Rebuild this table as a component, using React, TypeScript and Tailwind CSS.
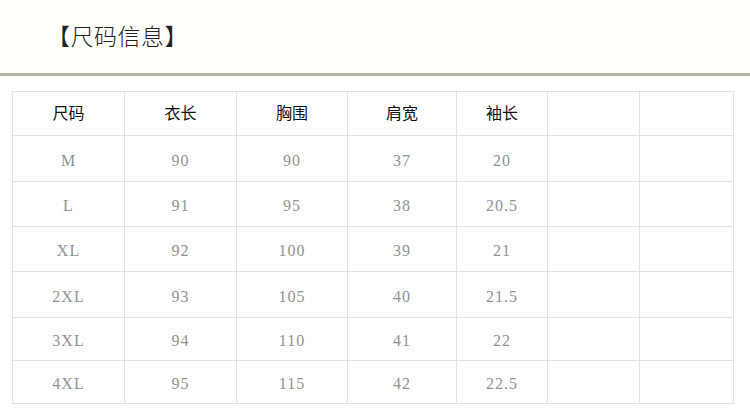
import React from 'react';

const headers = ['尺码', '衣长', '胸围', '肩宽', '袖长', '', ''];

const rows: { h: string; cells: string[] }[] = [
  { h: 'h-[46px]', cells: ['M', '90', '90', '37', '20', '', ''] },
  { h: 'h-[45px]', cells: ['L', '91', '95', '38', '20.5', '', ''] },
  { h: 'h-[45px]', cells: ['XL', '92', '100', '39', '21', '', ''] },
  { h: 'h-[46px]', cells: ['2XL', '93', '105', '40', '21.5', '', ''] },
  { h: 'h-[43px]', cells: ['3XL', '94', '110', '41', '22', '', ''] },
  { h: 'h-[43px]', cells: ['4XL', '95', '115', '42', '22.5', '', ''] },
];

const colWidths = ['w-[112px]', 'w-[112px]', 'w-[111px]', 'w-[109px]', 'w-[91px]', 'w-[92px]', 'w-[94px]'];

const App: React.FC = () => {
  return (
    <div className="w-[750px] h-[419px] bg-white overflow-hidden">
      {/* Title */}
      <div className="h-[73px] bg-[#fffffb] flex items-center pl-[47px] pb-[2px]">
        <h1
          className="text-[23px] text-[#222] tracking-[0.5px]"
          style={{ fontFamily: '"Noto Sans CJK SC", sans-serif', fontWeight: 300 }}
        >
          【尺码信息】
        </h1>
      </div>
      <div className="h-[3px] bg-[#b6b6a3]" />

      {/* Size table */}
      <div className="pt-[15px] pl-[12px]">
        <table className="border-collapse table-fixed w-[722px]">
          <colgroup>
            {colWidths.map((w, i) => (
              <col key={i} className={w} />
            ))}
          </colgroup>
          <thead>
            <tr className="h-[44px]">
              {headers.map((t, i) => (
                <th
                  key={i}
                  className="border border-[#e2e2e2] p-0 pb-[3px] text-center font-normal text-[16px] text-[#111]"
                  style={{ fontFamily: '"Noto Sans CJK SC", sans-serif' }}
                >
                  {t}
                </th>
              ))}
            </tr>
          </thead>
          <tbody>
            {rows.map((r, ri) => (
              <tr key={ri} className={r.h}>
                {r.cells.map((c, ci) => (
                  <td
                    key={ci}
                    className="border border-[#e2e2e2] p-0 pt-[4px] text-center text-[16px] tracking-[1px] text-[#929292]"
                    style={{ fontFamily: '"Liberation Serif", serif' }}
                  >
                    {c}
                  </td>
                ))}
              </tr>
            ))}
          </tbody>
        </table>
      </div>
    </div>
  );
};

export default App;
